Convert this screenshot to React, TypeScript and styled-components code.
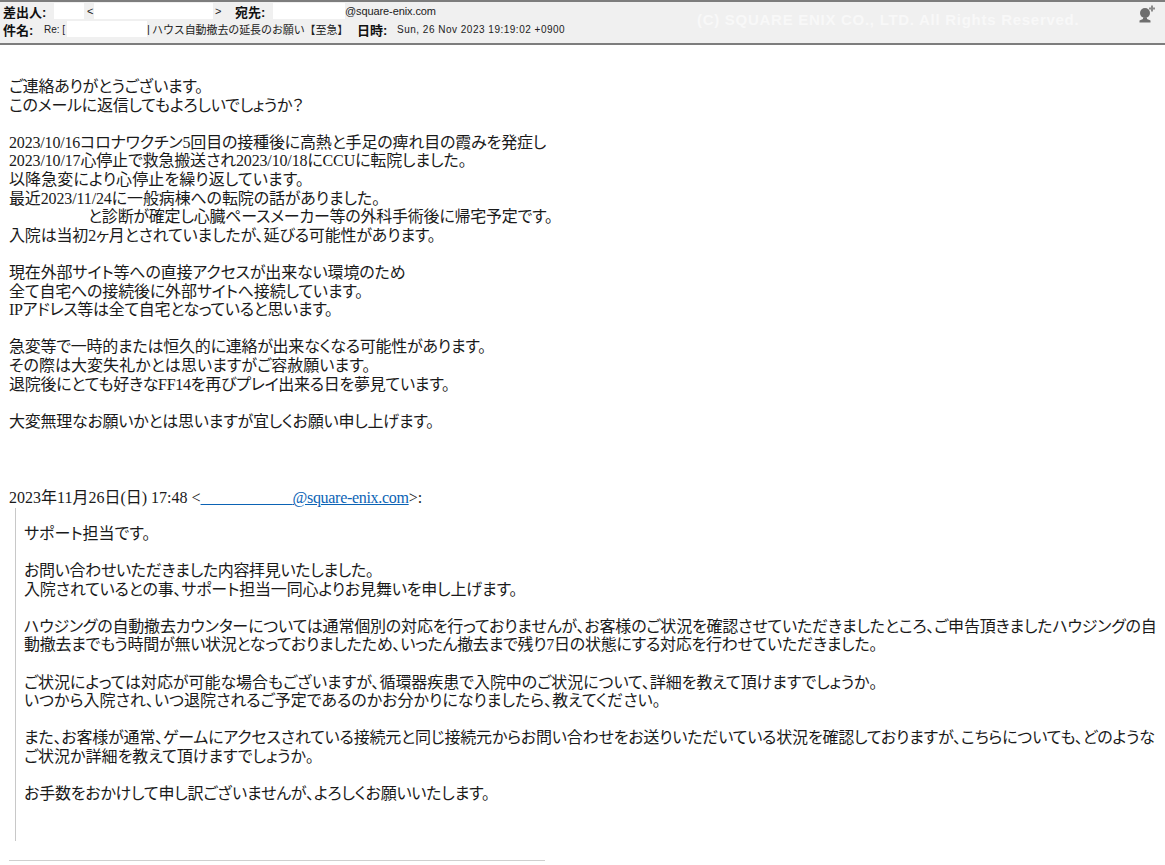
import React from 'react'
import styled, { createGlobalStyle } from 'styled-components'

const GlobalStyle = createGlobalStyle`
  html, body {
    margin: 0;
    padding: 0;
    background: #fff;
  }
  body {
    width: 1165px;
    height: 865px;
    overflow: hidden;
    font-family: "Liberation Serif", "Noto Sans CJK JP", serif;
    color: #1a1a1a;
  }
`

const Header = styled.header`
  position: relative;
  box-sizing: border-box;
  height: 45px;
  padding: 0 0 0 3px;
  background: #f0f0f0;
  border-top: 2px solid #7d7d7d;
  border-bottom: 2px solid #7d7d7d;
  font-family: "Liberation Sans", "Noto Sans CJK JP", sans-serif;
  font-size: 11px;
  color: #222;
`

const HeaderRow = styled.div`
  display: flex;
  align-items: center;
  height: 18px;
  white-space: nowrap;
`

const Label = styled.b<{ $w: number }>`
  width: ${p => p.$w}px;
  font-size: 13px;
  font-weight: 700;
  color: #111;
`

const Value = styled.span<{ $w?: number; $spacing?: number; $small?: boolean }>`
  ${p => (p.$w ? `width: ${p.$w}px;` : '')}
  ${p => (p.$small ? 'font-size: 10px;' : '')}
  letter-spacing: ${p => p.$spacing ?? 0}px;
`

const HeaderGap = styled.span<{ $w: number; $white?: boolean }>`
  display: inline-block;
  flex: none;
  width: ${p => p.$w}px;
  height: 16px;
  background: ${p => (p.$white ? '#fff' : 'transparent')};
`

const Watermark = styled.div`
  position: absolute;
  left: 697px;
  top: 9px;
  font-family: "Liberation Sans", sans-serif;
  font-size: 15px;
  font-weight: 700;
  letter-spacing: 0.72px;
  color: #f8f8f8;
  white-space: nowrap;
`

const AddContact = styled.svg`
  position: absolute;
  left: 1138px;
  top: 3px;
`

const Mail = styled.main`
  padding: 33px 0 0 9px;
  font-size: 16px;
  line-height: 18.6px;
`

const Block = styled.p`
  margin: 0 0 18.6px;
`

const Line = styled.div<{ $spacing?: number }>`
  height: 18.6px;
  white-space: nowrap;
  font-feature-settings: "palt";
  letter-spacing: ${p => p.$spacing ?? 0}px;
`

const Hidden = styled.span<{ $w: number }>`
  display: inline-block;
  width: ${p => p.$w}px;
`

const QuoteHead = styled(Line)`
  margin-top: 58px;
`

const Mailto = styled.a`
  color: #0b63b5;
  text-decoration: underline;
`

const MailDomain = styled.span`
  letter-spacing: -0.3px;
`

const Quote = styled.blockquote`
  margin: 0 0 0 6px;
  padding: 17px 0 19px 8px;
  border-left: 1px solid #c8c8c8;
`

const FootRule = styled.hr`
  width: 536px;
  height: 1px;
  margin: 19px 0 0;
  border: 0;
  background: #cfcfcf;
`

// text + tracking so each line ends where the original one does
type Row = [string, number?]

const intro: Row[][] = [
  [['ご連絡ありがとうございます。', -0.29], ['このメールに返信してもよろしいでしょうか？', -0.24]],
]

const otherBlocks: Row[][] = [
  [
    ['現在外部サイト等への直接アクセスが出来ない環境のため', -0.15],
    ['全て自宅への接続後に外部サイトへ接続しています。', -0.17],
    ['IPアドレス等は全て自宅となっていると思います。', -0.32],
  ],
  [
    ['急変等で一時的または恒久的に連絡が出来なくなる可能性があります。', -0.25],
    ['その際は大変失礼かとは思いますがご容赦願います。', 0.04],
    ['退院後にとても好きなFF14を再びプレイ出来る日を夢見ています。', -0.27],
  ],
  [['大変無理なお願いかとは思いますが宜しくお願い申し上げます。', -0.24]],
]

const quoteBlocks: Row[][] = [
  [['サポート担当です。']],
  [
    ['お問い合わせいただきました内容拝見いたしました。', -0.33],
    ['入院されているとの事、サポート担当一同心よりお見舞いを申し上げます。', -0.18],
  ],
  [
    ['ハウジングの自動撤去カウンターについては通常個別の対応を行っておりませんが、お客様のご状況を確認させていただきましたところ、ご申告頂きましたハウジングの自', -0.18],
    ['動撤去までもう時間が無い状況となっておりましたため、いったん撤去まで残り7日の状態にする対応を行わせていただきました。', -0.27],
  ],
  [
    ['ご状況によっては対応が可能な場合もございますが、循環器疾患で入院中のご状況について、詳細を教えて頂けますでしょうか。', -0.05],
    ['いつから入院され、いつ退院されるご予定であるのかお分かりになりましたら、教えてください。'],
  ],
  [
    ['また、お客様が通常、ゲームにアクセスされている接続元と同じ接続元からお問い合わせをお送りいただいている状況を確認しておりますが、こちらについても、どのような', -0.2],
    ['ご状況か詳細を教えて頂けますでしょうか。'],
  ],
  [['お手数をおかけして申し訳ございませんが、よろしくお願いいたします。', -0.21]],
]

const Rows = ({ blocks }: { blocks: Row[][] }) => (
  <>
    {blocks.map((rows, i) => (
      <Block key={i}>
        {rows.map(([text, spacing]) => (
          <Line key={text} $spacing={spacing}>{text}</Line>
        ))}
      </Block>
    ))}
  </>
)

const App: React.FC = () => (
  <>
    <GlobalStyle />
    <Header>
      <HeaderRow>
        <Label $w={51}>差出人:</Label>
        <HeaderGap $w={30} $white />
        <HeaderGap $w={3} />
        <Value $w={7}>&lt;</Value>
        <HeaderGap $w={119} $white />
        <HeaderGap $w={2} />
        <Value $w={20}>&gt;</Value>
        <Label $w={38}>宛先:</Label>
        <HeaderGap $w={72} $white />
        <Value $spacing={-0.1}>@square-enix.com</Value>
      </HeaderRow>
      <HeaderRow>
        <Label $w={41}>件名:</Label>
        <Value $w={23} $small>Re: [</Value>
        <HeaderGap $w={80} $white />
        <Value $w={5}>|</Value>
        <Value $w={205} $spacing={-0.1}>ハウス自動撤去の延長のお願い【至急】</Value>
        <Label $w={40}>日時:</Label>
        <Value $spacing={0.5} $small>Sun, 26 Nov 2023 19:19:02 +0900</Value>
      </HeaderRow>
      <Watermark>(C) SQUARE ENIX CO., LTD. All Rights Reserved.</Watermark>
      <AddContact width="20" height="20" viewBox="0 0 20 20">
        <circle cx="7" cy="8" r="5" fill="#6e6e6e" />
        <path d="M5 12.5h4v1.5l3.5 1.5v2H1.5v-2L5 14z" fill="#6e6e6e" />
        <path d="M13 .5h2v2h2v2h-2v2h-2v-2h-2v-2h2z" fill="#8a8a8a" />
      </AddContact>
    </Header>
    <Mail>
      <Rows blocks={intro} />
      <Block>
        <Line $spacing={-0.17}>2023/10/16コロナワクチン5回目の接種後に高熱と手足の痺れ目の霞みを発症し</Line>
        <Line $spacing={-0.15}>2023/10/17心停止で救急搬送され2023/10/18にCCUに転院しました。</Line>
        <Line $spacing={0.1}>以降急変により心停止を繰り返しています。</Line>
        <Line $spacing={-0.13}>最近2023/11/24に一般病棟への転院の話がありました。</Line>
        <Line $spacing={-0.23}><Hidden $w={79} />と診断が確定し心臓ペースメーカー等の外科手術後に帰宅予定です。</Line>
        <Line $spacing={-0.17}>入院は当初2ヶ月とされていましたが、延びる可能性があります。</Line>
      </Block>
      <Rows blocks={otherBlocks} />
      <QuoteHead>
        2023年11月26日(日) 17:48 &lt;
        <Mailto href="#">{'\u00a0'.repeat(23)}<MailDomain>@square-enix.com</MailDomain></Mailto>
        &gt;:
      </QuoteHead>
      <Quote>
        <Rows blocks={quoteBlocks} />
      </Quote>
      <FootRule />
    </Mail>
  </>
)

export default App
